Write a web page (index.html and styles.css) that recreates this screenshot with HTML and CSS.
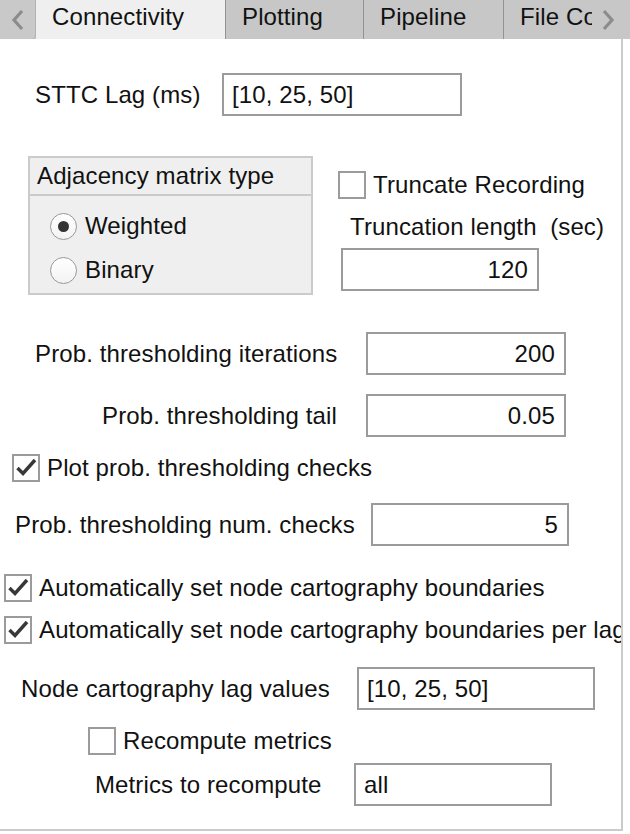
FILE: index.html
```html
<!DOCTYPE html>
<html>
<head>
<meta charset="utf-8">
<link rel="stylesheet" href="styles.css">
</head>
<body>
<div class="tabbar">
  <div class="tab-arrow left"><svg width="14" height="22" viewBox="0 0 14 22"><path d="M11 2 L3 11 L11 20" fill="none" stroke="#8c8c8c" stroke-width="3.2"/></svg></div>
  <div class="tab active">Connectivity</div>
  <div class="tab t-plot">Plotting</div>
  <div class="tab t-pipe">Pipeline</div>
  <div class="tab t-file">File Conversion</div>
  <div class="tab-arrow right"><svg width="14" height="22" viewBox="0 0 14 22"><path d="M3 2 L11 11 L3 20" fill="none" stroke="#8c8c8c" stroke-width="3.2"/></svg></div>
</div>
<div class="panel">
  <div class="row r-sttc">
    <span class="label w-sttc">STTC Lag (ms)</span>
    <div class="field w240">[10, 25, 50]</div>
  </div>

  <div class="middle">
    <div class="group">
      <div class="group-title">Adjacency matrix type</div>
      <div class="group-body">
        <div class="radio-row"><span class="radio on"><span class="dot"></span></span><span>Weighted</span></div>
        <div class="radio-row"><span class="radio"></span><span>Binary</span></div>
      </div>
    </div>
    <div class="side">
      <div class="check-row"><span class="box"></span><span>Truncate Recording</span></div>
      <div class="side-label">Truncation length&nbsp; (sec)</div>
      <div class="field num w198">120</div>
    </div>
  </div>

  <div class="row r-iter">
    <span class="label w-iter">Prob. thresholding iterations</span>
    <div class="field num w200">200</div>
  </div>
  <div class="row r-tail">
    <span class="label w-tail">Prob. thresholding tail</span>
    <div class="field num w200">0.05</div>
  </div>
  <div class="check-row r-plot">
    <span class="box"><svg width="24" height="24" viewBox="0 0 24 24"><path d="M3.5 12 L9 17.5 L21 4" fill="none" stroke="#383838" stroke-width="3.4"/></svg></span>
    <span>Plot prob. thresholding checks</span>
  </div>
  <div class="row r-checks">
    <span class="label w-checks">Prob. thresholding num. checks</span>
    <div class="field num w198">5</div>
  </div>
  <div class="check-row r-auto1">
    <span class="box"><svg width="24" height="24" viewBox="0 0 24 24"><path d="M3.5 12 L9 17.5 L21 4" fill="none" stroke="#383838" stroke-width="3.4"/></svg></span>
    <span>Automatically set node cartography boundaries</span>
  </div>
  <div class="check-row r-auto2">
    <span class="box"><svg width="24" height="24" viewBox="0 0 24 24"><path d="M3.5 12 L9 17.5 L21 4" fill="none" stroke="#383838" stroke-width="3.4"/></svg></span>
    <span>Automatically set node cartography boundaries per lag</span>
  </div>
  <div class="row r-lag">
    <span class="label w-lag">Node cartography lag values</span>
    <div class="field w238">[10, 25, 50]</div>
  </div>
  <div class="check-row r-recompute">
    <span class="box"></span>
    <span>Recompute metrics</span>
  </div>
  <div class="row r-metrics">
    <span class="label w-metrics">Metrics to recompute</span>
    <div class="field w198">all</div>
  </div>
</div>
</body>
</html>
```

FILE: styles.css
```css
html, body {
  margin: 0;
  padding: 0;
}
body {
  width: 630px;
  height: 834px;
  overflow: hidden;
  background: #ffffff;
  font-family: "Liberation Sans", Arial, Helvetica, sans-serif;
  font-size: 24px;
  letter-spacing: 0.12px;
  color: #111111;
}

/* ---------- tab bar ---------- */
.tabbar {
  display: flex;
  width: 630px;
  height: 39px;
  background: #c7c7c7;
}
.tab-arrow {
  display: flex;
  align-items: center;
  justify-content: center;
  height: 39px;
  flex: none;
}
.tab-arrow.left {
  width: 35px;
  background: #c9c9c9;
  border-bottom-right-radius: 4px;
  box-shadow: 1px 0 1px rgba(0,0,0,0.12);
}
.tab-arrow.right {
  width: 38px;
  padding-right: 6px;
  box-sizing: border-box;
}
.tab {
  flex: none;
  height: 39px;
  line-height: 33px;
  box-sizing: border-box;
  padding-left: 16px;
  white-space: nowrap;
  overflow: hidden;
  color: #111;
}
.tab.active {
  width: 189px;
  margin-left: 1px;
  background: #efefef;
}
.t-plot, .t-pipe, .t-file {
  border-left: 1px solid #929292;
}
.t-plot { width: 138px; }
.t-pipe { width: 140px; }
.t-file { width: 89px; }

/* ---------- panel ---------- */
.panel {
  width: 621px;
  height: 790px;
  border-right: 2px solid #cbcbcb;
  border-bottom: 2px solid #cbcbcb;
  overflow: hidden;
  display: flex;
  flex-direction: column;
  white-space: nowrap;
}

.row {
  display: flex;
  align-items: center;
  height: 43px;
  flex: none;
}
.label {
  flex: none;
}
.field {
  flex: none;
  box-sizing: border-box;
  height: 43px;
  border: 2px solid #9b9b9b;
  background: #fff;
  display: flex;
  align-items: center;
  padding: 0 8px;
  color: #111;
}
.field.num {
  justify-content: flex-end;
  padding-right: 9px;
}
.w240 { width: 240px; }
.w238 { width: 238px; }
.w200 { width: 200px; }
.w198 { width: 198px; }

.r-sttc { margin-top: 34px; padding-left: 35px; }
.w-sttc { width: 187px; }

.r-iter { margin-top: 37px; padding-left: 35px; }
.w-iter { width: 331px; }

.r-tail { margin-top: 19px; padding-left: 102px; }
.w-tail { width: 264px; }

.r-checks { margin-top: 21px; padding-left: 15px; }
.w-checks { width: 356px; }

.r-lag { margin-top: 23px; padding-left: 21px; }
.w-lag { width: 336px; }

.r-metrics { margin-top: 8px; padding-left: 95px; }
.w-metrics { width: 259px; }

/* ---------- checkboxes ---------- */
.check-row {
  display: flex;
  align-items: center;
  gap: 7px;
  height: 28px;
  flex: none;
}
.box {
  flex: none;
  width: 28px;
  height: 28px;
  box-sizing: border-box;
  border: 2px solid #9b9b9b;
  background: #fff;
  display: flex;
  align-items: center;
  justify-content: center;
}
.r-plot { margin-top: 17px; padding-left: 12px; }
.r-auto1 { margin-top: 28px; padding-left: 4px; }
.r-auto2 { margin-top: 14px; padding-left: 4px; }
.r-recompute { margin-top: 17px; padding-left: 88px; }

/* ---------- middle section ---------- */
.middle {
  display: flex;
  margin-top: 40px;
  height: 139px;
  flex: none;
}
.group {
  flex: none;
  margin-left: 28px;
  width: 285px;
  height: 139px;
  box-sizing: border-box;
  border: 2px solid #cbcbcb;
  background: #efefef;
}
.group-title {
  height: 36px;
  line-height: 36px;
  padding-left: 7px;
  border-bottom: 2px solid #cbcbcb;
}
.group-body {
  padding-top: 8px;
  padding-left: 20px;
}
.radio-row {
  display: flex;
  align-items: center;
  gap: 8px;
  height: 44px;
}
.radio {
  flex: none;
  width: 27px;
  height: 27px;
  box-sizing: border-box;
  border-radius: 50%;
  border: 1.5px solid #989898;
  background: linear-gradient(#ffffff, #f3f3f3);
  display: flex;
  align-items: center;
  justify-content: center;
}
.dot {
  width: 11px;
  height: 11px;
  border-radius: 50%;
  background: #333333;
}
.side {
  display: flex;
  flex-direction: column;
  margin-left: 25px;
  padding-top: 15px;
}
.side .check-row {
  height: 28px;
}
.side-label {
  margin-top: 14px;
  height: 28px;
  line-height: 28px;
  padding-left: 12px;
}
.side .field {
  margin-top: 7px;
  margin-left: 3px;
}
```
